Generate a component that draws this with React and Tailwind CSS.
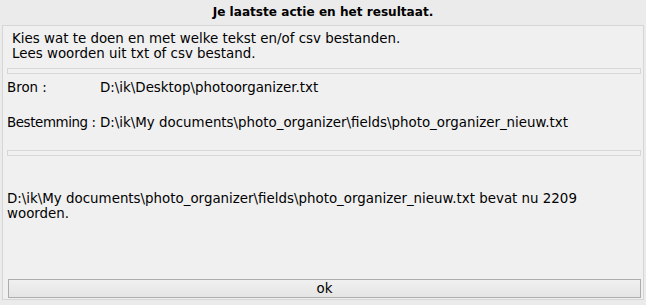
export default function App() {
  return (
    <div className="w-[646px] h-[305px] bg-[#ebebeb] text-black text-[13.4px] leading-[15px] font-['DejaVu_Sans',sans-serif] overflow-hidden">
      <div className="h-[25px] flex items-center justify-center font-bold text-[12.1px]">
        Je laatste actie en het resultaat.
      </div>
      <div className="mx-[2px] h-[275px] border border-[#d6d6d6] bg-[#f0f0f0] flex flex-col">
        <div className="mt-[5px] pl-[9px]">
          <div>Kies wat te doen en met welke tekst en/of csv bestanden.</div>
          <div>Lees woorden uit txt of csv bestand.</div>
        </div>
        <div className="mt-[7px] ml-[4px] mr-[2px] h-[6px] border border-[#d8d8d8] bg-[#f0f0f0]" />
        <div className="mt-[6px] pl-[4px] flex">
          <span className="w-[93px] shrink-0">Bron :</span>
          <span>D:\ik\Desktop\photoorganizer.txt</span>
        </div>
        <div className="mt-[20px] pl-[4px] flex whitespace-pre">
          <span className="w-[93px] shrink-0 tracking-[-0.4px]">Bestemming : </span>
          <span>D:\ik\My documents\photo_organizer\fields\photo_organizer_nieuw.txt</span>
        </div>
        <div className="mt-[20px] ml-[4px] mr-[2px] h-[6px] border border-[#d8d8d8] bg-[#f0f0f0]" />
        <div className="mt-[35px] pl-[4px] w-[600px]">
          D:\ik\My documents\photo_organizer\fields\photo_organizer_nieuw.txt bevat nu 2209 woorden.
        </div>
        <div className="mt-auto mb-[1px] ml-[5px] mr-[2px] h-[19px] border border-[#acacac] bg-gradient-to-b from-[#f0f0f0] to-[#e5e5e5] flex items-center justify-center">
          ok
        </div>
      </div>
    </div>
  );
}
